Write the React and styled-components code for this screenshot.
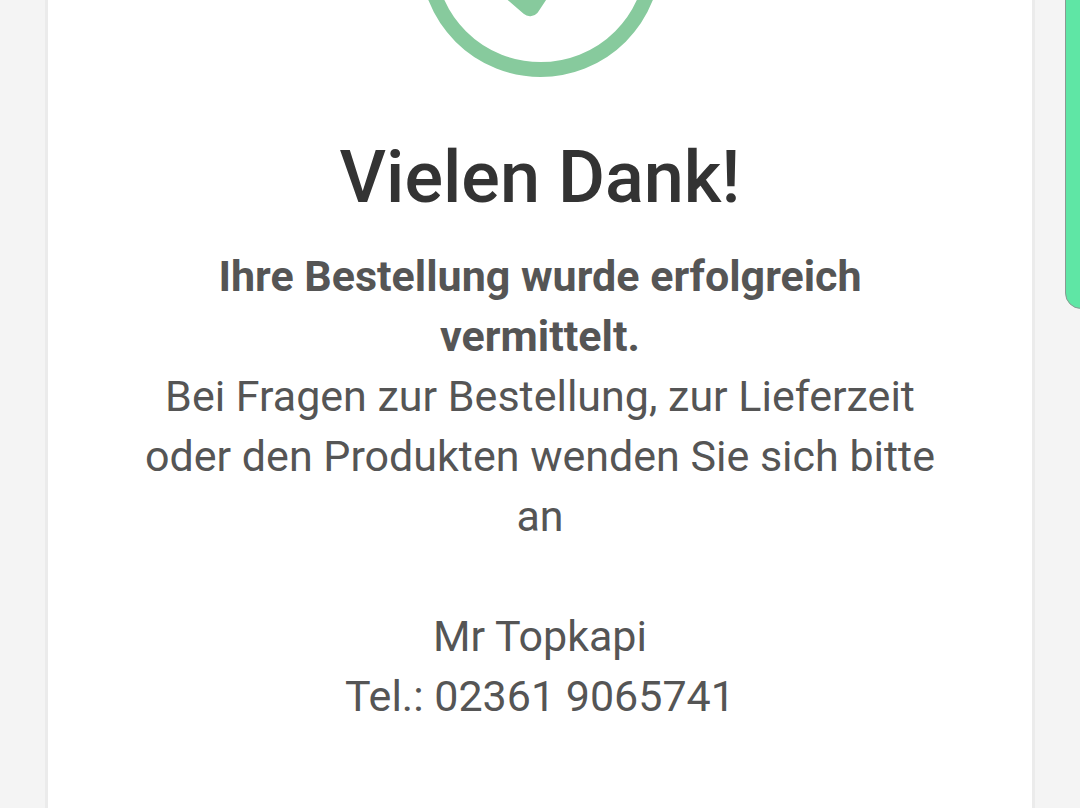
import React from 'react'
import styled, { createGlobalStyle } from 'styled-components';

const GlobalStyle = createGlobalStyle`
    * {
        box-sizing: border-box;
    }

    body {
        margin: 0;
        background: #f4f4f4;
        font-family: Roboto, "Liberation Sans", sans-serif;
        color: #555555;
    }
`

const Page = styled.main`
    min-height: 100vh;
    padding: 0 45px;
    display: flex;
`

const Card = styled.section`
    flex: 1;
    display: flex;
    flex-direction: column;
    align-items: center;
    padding: 0 80px 64px;
    background: #ffffff;
    border: solid #ebebeb;
    border-width: 0 3px;
    text-align: center;
`

const CheckIcon = styled.svg`
    display: block;
    width: 242px;
    height: 78px;
`

const Title = styled.h1`
    margin: 58px 0 26px;
    font-size: 72px;
    line-height: 84px;
    font-weight: 500;
    color: #333333;
`

const Message = styled.p`
    margin: 0;
    font-size: 43px;
    line-height: 60px;
`

const Contact = styled.address`
    margin-top: 60px;
    font-size: 43px;
    line-height: 60px;
    font-style: normal;
`

// green tab on the right edge of the screen
const EdgeTab = styled.aside`
    position: fixed;
    top: -20px;
    right: -20px;
    width: 35px;
    height: 329px;
    background: #5fe6a5;
    border: 1px solid #8a9a92;
    border-radius: 16px;
`

export default function App() {
    return (
        <>
            <GlobalStyle />
            <Page>
                <Card>
                    <CheckIcon viewBox="0 164 242 78" aria-hidden="true">
                        <circle cx="121.6" cy="120.5" r="113" fill="none" stroke="#87ca9d" strokeWidth="14.8" />
                        <path d="M61 127L111 170.5L166 88" fill="none" stroke="#87ca9d" strokeWidth="19.5" strokeLinecap="round" strokeLinejoin="round" />
                    </CheckIcon>
                    <Title>Vielen Dank!</Title>
                    <Message>
                        <strong>Ihre Bestellung wurde erfolgreich vermittelt.</strong>
                        <br />
                        Bei Fragen zur Bestellung, zur Lieferzeit oder den Produkten wenden Sie sich bitte an
                    </Message>
                    <Contact>
                        Mr Topkapi
                        <br />
                        Tel.: 02361 9065741
                    </Contact>
                </Card>
            </Page>
            <EdgeTab />
        </>
    )
}
